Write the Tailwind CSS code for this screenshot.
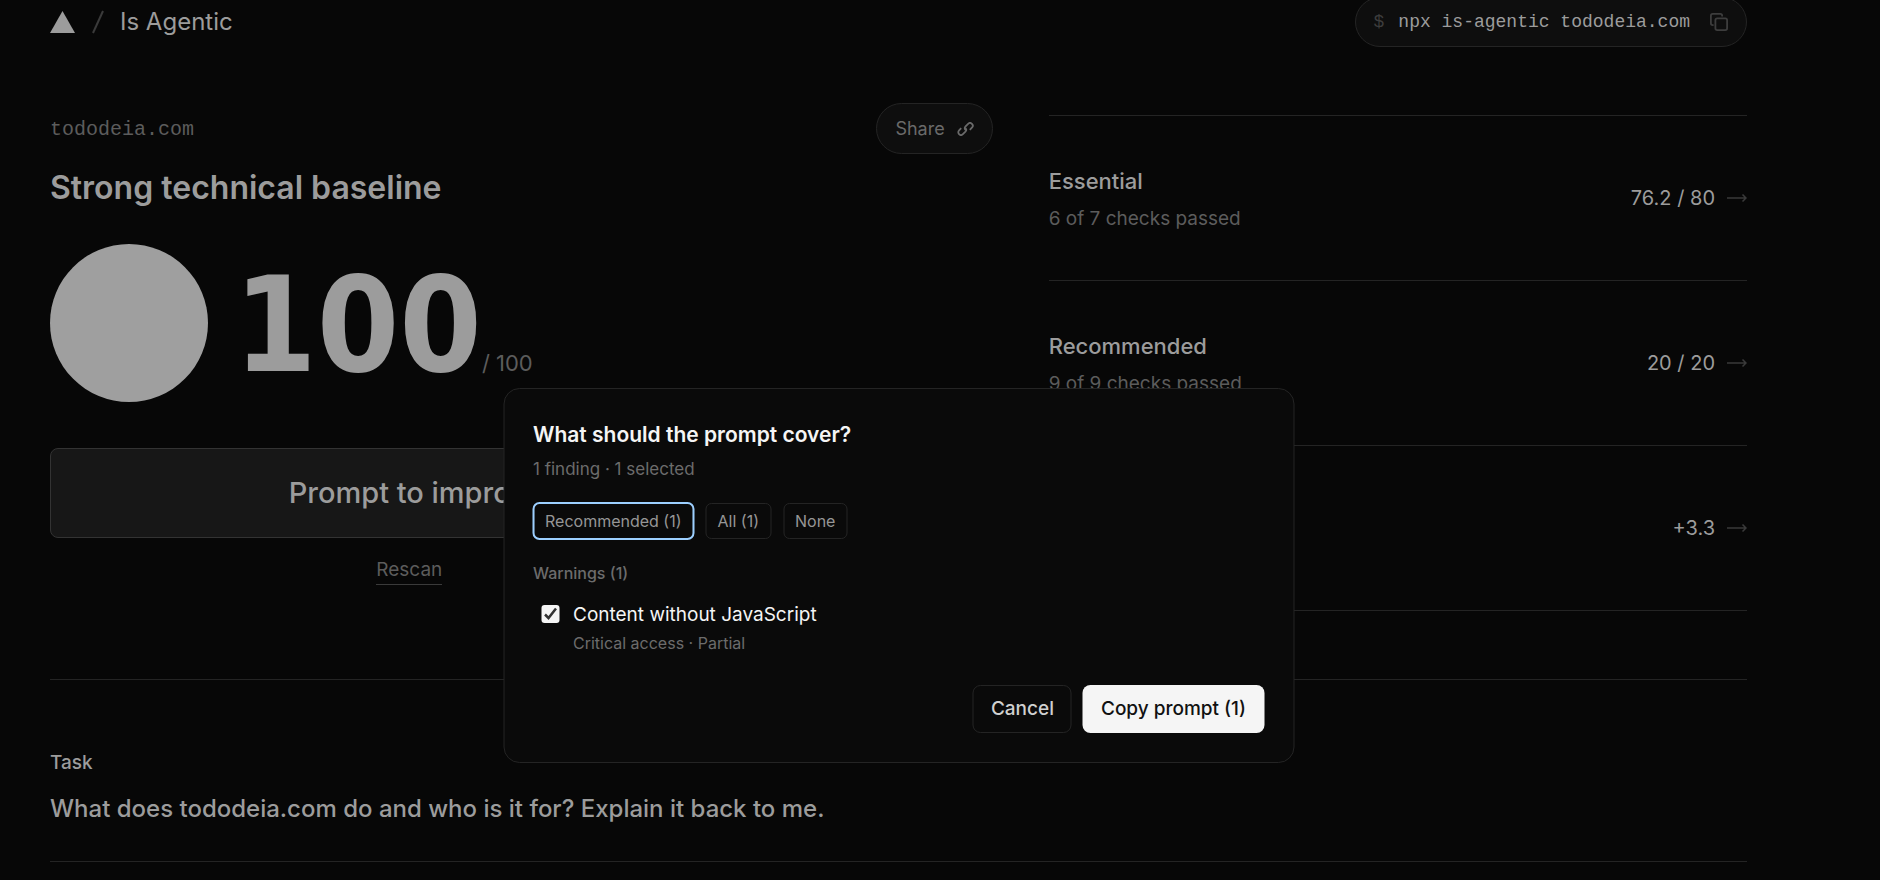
<!DOCTYPE html>
<html lang="en">
<head>
  <meta charset="UTF-8" />
  <meta name="viewport" content="width=device-width, initial-scale=1.0"/>
  <title>Is Agentic</title>
  <script src="https://cdn.jsdelivr.net/npm/@tailwindcss/browser@4"></script>
  <style>
    body {
      font-family: Inter, 'Liberation Sans', sans-serif;
    }
  </style>
</head>

<body class="bg-[#070707] text-[#9c9c9c] min-h-screen overflow-hidden">

<div class="relative mr-[83px] px-[50px]">

  <!-- Header -->
  <header class="flex h-11 items-center justify-between">
    <a href="#" class="flex items-center">
      <svg class="w-[25px] h-[22px]" viewBox="0 0 25 22" fill="#9c9c9c"><path d="M12.5 0L25 22H0z"/></svg>
      <svg class="ml-[17px] w-3 h-6" viewBox="0 0 12 24" fill="none" stroke="#3a3a3a" stroke-width="2"><path d="M11 1L1 23"/></svg>
      <span class="ml-4 text-2xl">Is Agentic</span>
    </a>
    <button type="button" class="flex h-[50px] shrink-0 items-center rounded-full border border-[#242424] bg-[#0e0e0e] px-[18px] font-['Liberation_Mono',monospace] text-lg">
      <span class="text-[#3d3d3d]">$</span>
      <span class="ml-3.5">npx is-agentic tododeia.com</span>
      <svg class="ml-5 w-[18px] h-[18px]" viewBox="0 0 20 20" fill="none" stroke="#3d3d3d" stroke-width="2"><rect x="6" y="6" width="13" height="13" rx="2"/><path d="M4 13.500H3A2 2 0 0 1 1 11.500V3a2 2 0 0 1 2-2h8.500a2 2 0 0 1 2 2v1"/></svg>
    </button>
  </header>

  <!-- Score and categories -->
  <main class="grid grid-cols-[1.35fr_1fr] gap-14 border-b border-[#242424] pt-[59px] pb-[68px]">
    <section>
      <div class="flex items-center justify-between">
        <p class="pt-0.5 font-['Liberation_Mono',monospace] text-xl text-[#5c5c5c]">tododeia.com</p>
        <button type="button" class="flex h-[51px] items-center gap-3 rounded-full border border-[#242424] bg-[#0e0e0e] px-[18px] text-lg text-[#6a6a6a]">
          Share
          <svg class="w-[17px] h-[14px]" viewBox="0 0 17 14" fill="none" stroke="#6a6a6a" stroke-width="1.800"><path d="M4.200 6.200L2.100 8.300a2.700 2.700 0 0 0 3.800 3.900l2.500-2.500a2.700 2.700 0 0 0 0-3.700"/><path d="M12.800 7.800l2.100-2.100a2.700 2.700 0 0 0-3.800-3.900L8.600 4.300a2.700 2.700 0 0 0 0 3.700"/></svg>
        </button>
      </div>
      <h1 class="mt-[14px] text-[32px] leading-10 font-semibold">Strong technical baseline</h1>
      <div class="mt-9 flex items-end">
        <div class="size-[158px] shrink-0 rounded-full bg-[#9f9f9f]"></div>
        <div class="ml-[26px] flex items-baseline">
          <span class="font-['DejaVu_Sans_Condensed','DejaVu_Sans',sans-serif] text-[132px] leading-[154px] font-bold">100</span>
          <span class="text-[22px] text-[#5c5c5c]">/ 100</span>
        </div>
      </div>
      <button type="button" class="mt-[46px] h-[90px] w-full rounded-lg border border-[#333] bg-[#171717] text-[29px] font-medium">Prompt to improve agent baseline</button>
      <div class="mt-[18px] flex justify-center gap-20 text-[19px] leading-7 text-[#5c5c5c]">
        <a href="#" class="border-b border-[#3a3a3a]">Rescan</a>
        <a href="#" class="border-b border-[#3a3a3a]">View last output</a>
      </div>
    </section>

    <section class="mt-3 text-xl">
      <a href="#" class="flex h-[165px] items-center justify-between border-t border-[#242424]">
        <span class="pt-[3px]">
          <span class="block text-[22px] leading-8 font-medium">Essential</span>
          <span class="mt-1.5 block text-[19px] leading-8 text-[#5c5c5c]">6 of 7 checks passed</span>
        </span>
        <span class="flex items-center gap-3">76.2 / 80 <svg class="w-5 h-2" viewBox="0 0 20 8" fill="none" stroke="#3a3a3a" stroke-width="1.500"><path d="M0 4h19M15.500 0.500L19 4l-3.500 3.500"/></svg></span>
      </a>
      <a href="#" class="flex h-[165px] items-center justify-between border-t border-[#242424]">
        <span class="pt-[3px]">
          <span class="block text-[22px] leading-8 font-medium">Recommended</span>
          <span class="mt-1.5 block text-[19px] leading-8 text-[#5c5c5c]">9 of 9 checks passed</span>
        </span>
        <span class="flex items-center gap-3">20 / 20 <svg class="w-5 h-2" viewBox="0 0 20 8" fill="none" stroke="#3a3a3a" stroke-width="1.500"><path d="M0 4h19M15.500 0.500L19 4l-3.500 3.500"/></svg></span>
      </a>
      <a href="#" class="flex h-[166px] items-center justify-between border-y border-[#242424]">
        <span class="pt-[3px]">
          <span class="block text-[22px] leading-8 font-medium">Bonus</span>
          <span class="mt-1.5 block text-[19px] leading-8 text-[#5c5c5c]">Extra checks</span>
        </span>
        <span class="flex items-center gap-3">+3.3 <svg class="w-5 h-2" viewBox="0 0 20 8" fill="none" stroke="#3a3a3a" stroke-width="1.500"><path d="M0 4h19M15.500 0.500L19 4l-3.500 3.500"/></svg></span>
      </a>
    </section>
  </main>

  <!-- Task -->
  <section class="border-b border-[#242424] pt-[69px] pb-9">
    <h2 class="text-[19px] leading-7 font-medium">Task</h2>
    <p class="mt-4 text-2xl leading-8 font-medium">What does tododeia.com do and who is it for? Explain it back to me.</p>
  </section>

  <!-- Prompt dialog -->
  <div role="dialog" aria-labelledby="dialogTitle" class="absolute top-[388px] left-1/2 w-[791px] -translate-x-1/2 rounded-2xl border border-[#242424] bg-[#0a0a0a] px-[29px] pt-[30px] pb-[29px]">
    <h2 id="dialogTitle" class="text-[21px] leading-8 font-semibold text-[#f5f5f5]">What should the prompt cover?</h2>
    <p class="mt-1 text-[17px] leading-7 text-[#6c6c6c]">1 finding · 1 selected</p>
    <div class="mt-5 flex gap-3 text-base text-[#969696]">
      <button type="button" class="h-9 rounded-md border border-[#242424] px-[11px] outline-2 -outline-offset-1 outline-[#9ccfff]">Recommended (1)</button>
      <button type="button" class="h-9 rounded-md border border-[#242424] px-[11px]">All (1)</button>
      <button type="button" class="h-9 rounded-md border border-[#242424] px-[11px]">None</button>
    </div>
    <fieldset class="mt-5">
      <legend class="text-base leading-7 font-medium text-[#6c6c6c]">Warnings (1)</legend>
      <div class="mt-[14px] flex items-start pl-2">
        <span class="relative mt-1 size-[18px]">
          <input type="checkbox" id="finding" checked class="block size-[18px] appearance-none rounded-[3px] bg-[#f5f5f5]">
          <svg class="pointer-events-none absolute inset-0 size-[18px]" viewBox="0 0 18 18" fill="none" stroke="#333" stroke-width="2.500"><path d="M3.500 9.500L7 13l7.500-9.500"/></svg>
        </span>
        <label for="finding" class="ml-[14px]">
          <span class="block text-[19px] leading-7 text-[#f5f5f5]">Content without JavaScript</span>
          <span class="block text-base leading-7 text-[#6c6c6c]">Critical access · Partial</span>
        </label>
      </div>
    </fieldset>
    <div class="mt-7 flex justify-end gap-[11px] text-[19px] font-medium">
      <button type="button" class="h-12 rounded-lg border border-[#242424] px-[17px] text-[#d0d0d0]">Cancel</button>
      <button type="button" class="h-12 rounded-lg bg-[#f5f5f5] px-[18px] text-[#111]">Copy prompt (1)</button>
    </div>
  </div>

</div>

</body>
</html>
